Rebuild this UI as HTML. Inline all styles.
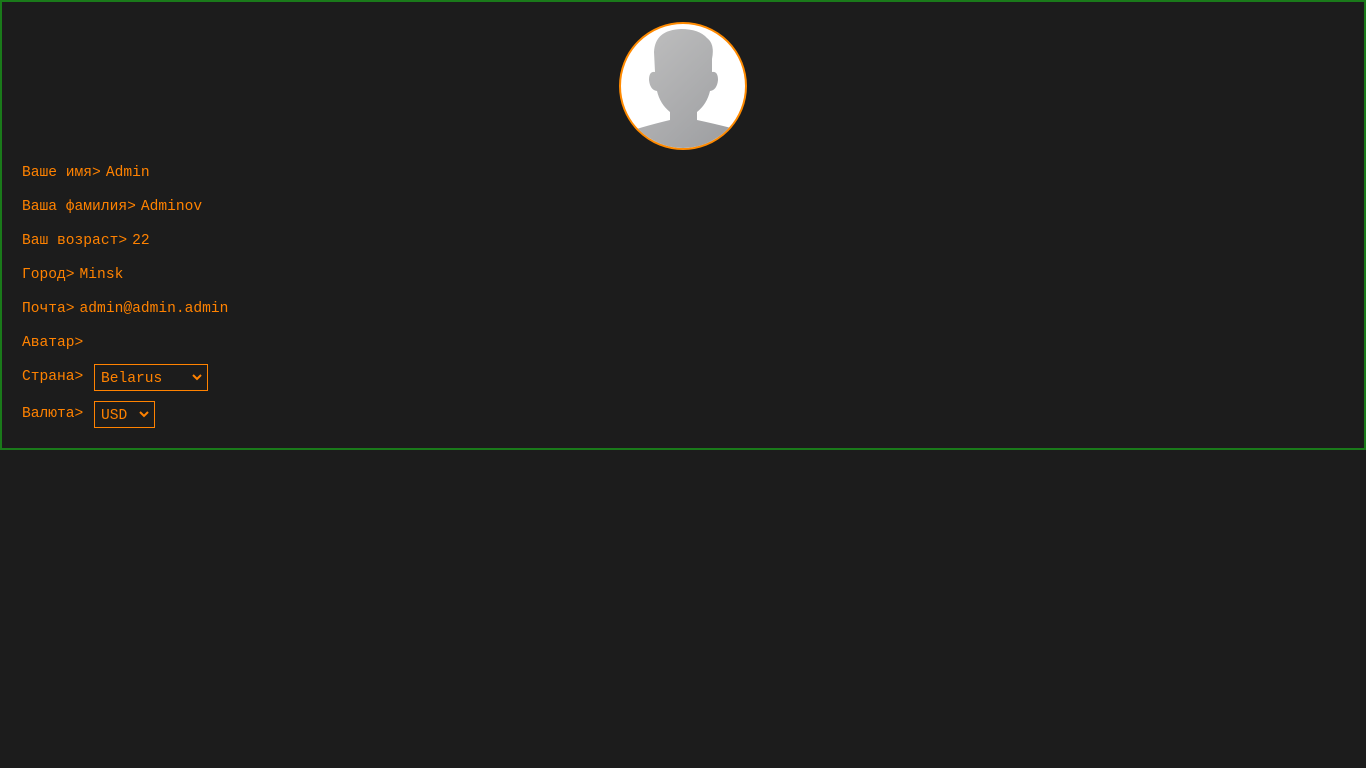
<!DOCTYPE html>
<html><head><meta charset="utf-8"><style>
html,body{margin:0;background:#1c1c1c;}
.box{position:absolute;left:0;top:0;width:1362px;height:446px;border:2px solid #1a7a1a;}
.t{position:absolute;left:22px;font-family:"Liberation Mono",monospace;font-size:14.6px;color:#ff8200;line-height:18px;white-space:pre;}
.t b{font-weight:normal;margin-left:5px;}
.sel{position:absolute;border:1px solid #ff8200;box-sizing:border-box;font-family:"Liberation Mono",monospace;font-size:14.6px;color:#ff8200;line-height:18px;}
.av{position:absolute;left:619px;top:22px;width:124px;height:124px;border:2px solid #ff8a00;border-radius:50%;background:#fff;overflow:hidden;}
</style></head><body>
<div class="box"></div>
<div class="av"><svg width="124" height="124" viewBox="0 0 124 124">
<defs><linearGradient id="g" x1="0" y1="0" x2="1" y2="1"><stop offset="0" stop-color="#c2c2c2"/><stop offset="1" stop-color="#9a9b9e"/></linearGradient></defs>
<path fill="url(#g)" d="M33 28 Q34 6 60 5 Q78 5 86 14 Q94 20 91 35 L91 48 Q97 47 97 56 Q96 66 89 67 Q86 80 76 88 L76 96 Q95 100 118 106 L124 124 L0 124 L12 106 Q32 100 49 96 L49 88 Q39 80 36 67 Q29 66 28 56 Q28 47 34 48 Z"/>
</svg></div>
<div class="t" style="top:164px">Ваше имя&gt;<b>Admin</b></div>
<div class="t" style="top:198px">Ваша фамилия&gt;<b>Adminov</b></div>
<div class="t" style="top:232px">Ваш возраст&gt;<b>22</b></div>
<div class="t" style="top:266px">Город&gt;<b>Minsk</b></div>
<div class="t" style="top:300px">Почта&gt;<b>admin@admin.admin</b></div>
<div class="t" style="top:334px">Аватар&gt;</div>
<div class="t" style="top:368px">Страна&gt;</div>
<div class="t" style="top:405px">Валюта&gt;</div>
<div class="sel" style="left:94px;top:364px;width:114px;height:27px;padding:5px 0 0 6px;">Belarus<svg style="position:absolute;right:5px;top:9px" width="10" height="7" viewBox="0 0 10 7"><path d="M1 1 L5 5 L9 1" stroke="#ff8200" stroke-width="2" fill="none"/></svg></div>
<div class="sel" style="left:94px;top:401px;width:61px;height:27px;padding:5px 0 0 6px;">USD<svg style="position:absolute;right:5px;top:9px" width="10" height="7" viewBox="0 0 10 7"><path d="M1 1 L5 5 L9 1" stroke="#ff8200" stroke-width="2" fill="none"/></svg></div>
</body></html>
